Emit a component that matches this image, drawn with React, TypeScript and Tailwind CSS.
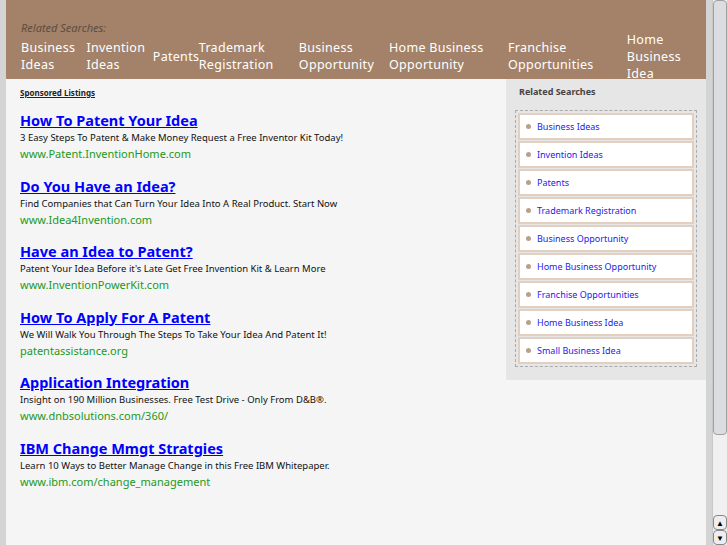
export default function App() {
  const nav = [
    ["Business", "Ideas"], ["Invention", "Ideas"], ["Patents"], ["Trademark", "Registration"],
    ["Business", "Opportunity"], ["Home Business", "Opportunity"], ["Franchise", "Opportunities"], ["Home", "Business Idea"],
  ];
  const widths = ["w-[66px]", "w-[67px]", "w-[46px]", "w-[101px]", "w-[91px]", "w-[120px]", "w-[120px]", "w-[80px]"];
  const ads = [
    ["How To Patent Your Idea", "3 Easy Steps To Patent & Make Money Request a Free Inventor Kit Today!", "www.Patent.InventionHome.com"],
    ["Do You Have an Idea?", "Find Companies that Can Turn Your Idea Into A Real Product. Start Now", "www.Idea4Invention.com"],
    ["Have an Idea to Patent?", "Patent Your Idea Before it's Late Get Free Invention Kit & Learn More", "www.InventionPowerKit.com"],
    ["How To Apply For A Patent", "We Will Walk You Through The Steps To Take Your Idea And Patent It!", "patentassistance.org"],
    ["Application Integration", "Insight on 190 Million Businesses. Free Test Drive - Only From D&B®.", "www.dnbsolutions.com/360/"],
    ["IBM Change Mmgt Stratgies", "Learn 10 Ways to Better Manage Change in this Free IBM Whitepaper.", "www.ibm.com/change_management"],
  ];
  const side = ["Business Ideas", "Invention Ideas", "Patents", "Trademark Registration", "Business Opportunity", "Home Business Opportunity", "Franchise Opportunities", "Home Business Idea", "Small Business Idea"];
  return (
    <div className="flex w-[727px] h-[545px] overflow-hidden bg-[#d4d4d4] font-['DejaVu_Sans',sans-serif]">
      <div className="ml-[6px] w-[700px] h-full flex flex-col bg-[#f5f5f5]">
        <div className="h-[79px] bg-[#a38269] pl-[15px] pt-[21px] shrink-0">
          <div className="italic text-[11px] text-[#5e4d40] leading-[14px] font-['Liberation_Sans',sans-serif]">Related Searches:</div>
          <div className="flex mt-[3px] h-[36px] items-center">
            {nav.map((n, i) => (
              <div key={i} className={`${widths[i]} text-white text-[12.5px] leading-[17px] tracking-[0.3px]`}>
                {n.map((l, j) => <div key={j}>{l}</div>)}
              </div>
            ))}
          </div>
        </div>
        <div className="flex flex-1">
          <div className="w-[500px] pl-[14px]">
            <div className="mt-[8px] text-[8px] font-bold underline text-[#222] leading-[12px]">Sponsored Listings</div>
            <div className="mt-[11px] flex flex-col gap-[12.5px]">
              {ads.map((a, i) => (
                <div key={i}>
                  <div className="text-[#0000ff] font-bold underline text-[14.5px] leading-[20px]">{a[0]}</div>
                  <div className="text-[9.5px] text-[#111] leading-[15px]">{a[1]}</div>
                  <div className="text-[#229922] text-[11px] leading-[18px]">{a[2]}</div>
                </div>
              ))}
            </div>
          </div>
          <div className="w-[200px] self-start bg-[#e6e6e6] pt-[7px] pb-[9px] px-[9px] h-[301px]">
            <div className="text-[9px] font-bold text-[#444] pl-[4px] leading-[12px]">Related Searches</div>
            <div className="mt-[12px] border border-dashed border-[#aaaaaa] p-[2px] flex flex-col gap-[1px]">
              {side.map((s) => (
                <div key={s} className="h-[27px] bg-white border-2 border-[#e2cfc0] flex items-center pl-[6px] gap-[6px]">
                  <span className="w-[5px] h-[5px] rounded-full bg-[#b8a08a]"></span>
                  <span className="text-[#2222ee] text-[9px]">{s}</span>
                </div>
              ))}
            </div>
          </div>
        </div>
      </div>
      <div className="w-[6px]"></div>
      <div className="w-[15px] h-full flex flex-col bg-[#f0f0f0] border-l border-[#c8c8c8]">
        <div className="h-[435px] bg-[#dcdde0] border border-[#a0a0a0] rounded-sm"></div>
        <div className="flex-1"></div>
        <div className="h-[15px] border border-[#888] rounded-sm bg-[#eee] flex items-center justify-center text-[8px]">▲</div>
        <div className="h-[15px] border border-[#888] rounded-sm bg-[#eee] flex items-center justify-center text-[8px]">▼</div>
      </div>
    </div>
  );
}
